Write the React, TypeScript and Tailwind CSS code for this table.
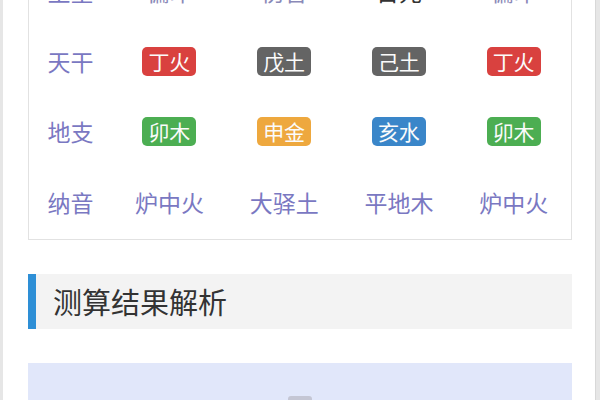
import React from "react";

const font = { fontFamily: '"Noto Sans CJK SC", "Noto Sans", sans-serif' };

type Cell = { t: string; c?: string; badge?: string };

const rows: { label: string; cells: Cell[] }[] = [
  {
    label: "主星",
    cells: [
      { t: "偏印", c: "text-[#8a89b8]" },
      { t: "伤官", c: "text-[#8a89b8]" },
      { t: "日元", c: "text-[#333333]" },
      { t: "偏印", c: "text-[#8a89b8]" },
    ],
  },
  {
    label: "天干",
    cells: [
      { t: "丁火", badge: "bg-[#d9413f]" },
      { t: "戊土", badge: "bg-[#646464]" },
      { t: "己土", badge: "bg-[#646464]" },
      { t: "丁火", badge: "bg-[#d9413f]" },
    ],
  },
  {
    label: "地支",
    cells: [
      { t: "卯木", badge: "bg-[#4cae52]" },
      { t: "申金", badge: "bg-[#eea83e]" },
      { t: "亥水", badge: "bg-[#3a86c9]" },
      { t: "卯木", badge: "bg-[#4cae52]" },
    ],
  },
  {
    label: "纳音",
    cells: [
      { t: "炉中火", c: "text-[#7a78c2]" },
      { t: "大驿土", c: "text-[#7a78c2]" },
      { t: "平地木", c: "text-[#7a78c2]" },
      { t: "炉中火", c: "text-[#7a78c2]" },
    ],
  },
];

export default function App() {
  return (
    <div className="w-[600px] h-[400px] overflow-hidden flex bg-[#ececec]" style={font}>
      <div className="w-[3px] bg-[#e6e6e6]" />
      <div className="flex-1 bg-white flex flex-col pl-[25px] pr-[23px]">
        <div className="-mt-[45px] border border-[#e2e2e2] flex flex-col">
          {rows.map((r, i) => (
            <div key={i} className={`${i === 3 ? "h-[73px]" : "h-[70px]"} flex items-center`}>
              <div className="w-[83px] flex justify-center text-[23px] text-[#7a78c2] leading-none">
                {r.label}
              </div>
              {r.cells.map((c, j) => (
                <div key={j} className="flex-1 flex justify-center">
                  {c.badge ? (
                    <span
                      className={`${c.badge} text-[#fbfbfb] text-[21px] leading-none h-[29px] px-[6px] rounded-[5px] flex items-center`}
                    >
                      {c.t}
                    </span>
                  ) : (
                    <span className={`${c.c} text-[23px] leading-none`}>{c.t}</span>
                  )}
                </div>
              ))}
            </div>
          ))}
        </div>
        <div className="mt-[34px] h-[55px] flex bg-[#f3f3f3]">
          <div className="w-[8px] bg-[#2e8fd6]" />
          <div className="flex items-center pl-[17px] text-[29px] text-[#333333] leading-none">
            测算结果解析
          </div>
        </div>
        <div className="mt-[34px] flex-1 bg-[#e1e7fa] flex justify-center items-end">
          <div className="w-[24px] h-[4px] rounded-t-[3px] bg-[#c4c6d4]" />
        </div>
      </div>
      <div className="w-[5px] bg-[#e6e6e6] border-l border-[#d8d8d8]" />
    </div>
  );
}
